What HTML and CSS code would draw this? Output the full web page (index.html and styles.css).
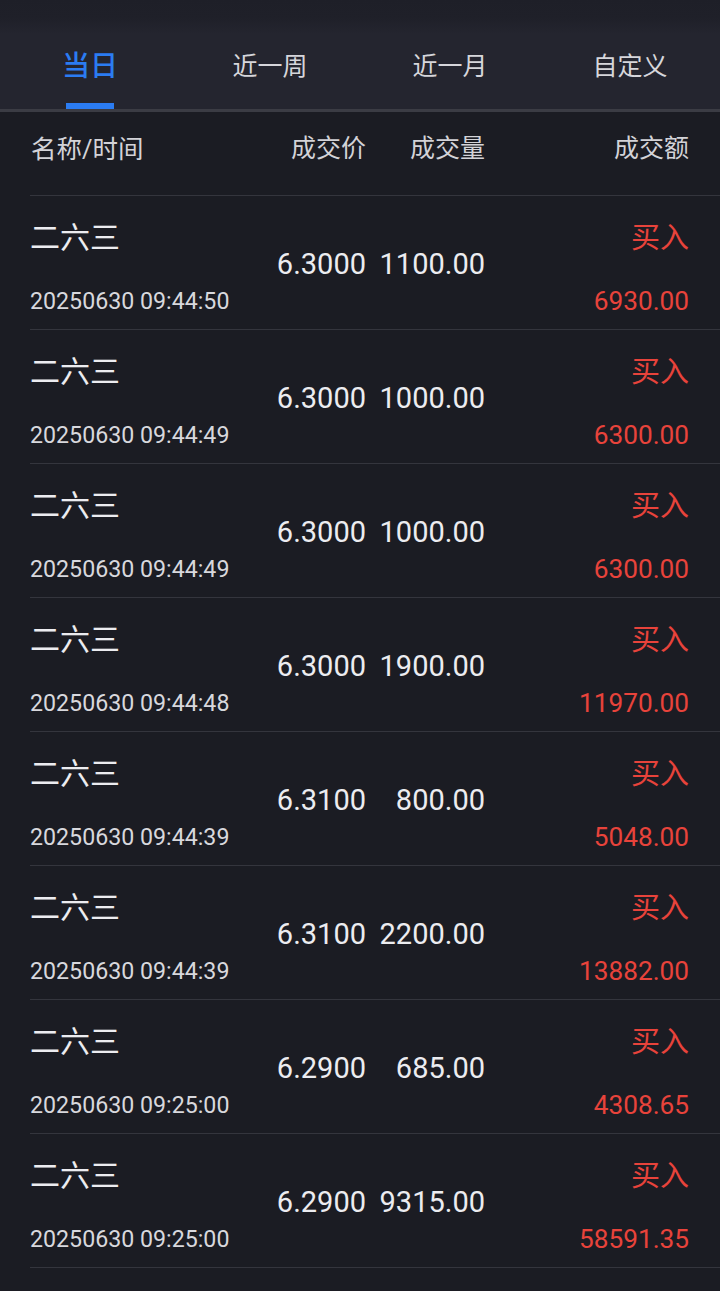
FILE: index.html
```html
<!DOCTYPE html>
<html lang="zh-CN">
<head>
<meta charset="utf-8">
<title>成交明细</title>
<link rel="stylesheet" href="styles.css">
</head>
<body>
<div class="page">
  <nav class="tabs">
    <div class="tab active"><span class="tab-label">当日</span><span class="tab-bar"></span></div>
    <div class="tab"><span class="tab-label">近一周</span><span class="tab-bar"></span></div>
    <div class="tab"><span class="tab-label">近一月</span><span class="tab-bar"></span></div>
    <div class="tab"><span class="tab-label">自定义</span><span class="tab-bar"></span></div>
  </nav>
  <div class="list">
    <div class="head">
      <span class="h-name">名称/时间</span>
      <span class="h-col">成交价</span>
      <span class="h-col">成交量</span>
      <span class="h-col">成交额</span>
    </div>
    <div class="row">
      <span class="name">二六三</span><span class="time">20250630 09:44:50</span>
      <span class="price">6.3000</span><span class="vol">1100.00</span>
      <span class="side">买入</span><span class="amt">6930.00</span>
    </div>
    <div class="row">
      <span class="name">二六三</span><span class="time">20250630 09:44:49</span>
      <span class="price">6.3000</span><span class="vol">1000.00</span>
      <span class="side">买入</span><span class="amt">6300.00</span>
    </div>
    <div class="row">
      <span class="name">二六三</span><span class="time">20250630 09:44:49</span>
      <span class="price">6.3000</span><span class="vol">1000.00</span>
      <span class="side">买入</span><span class="amt">6300.00</span>
    </div>
    <div class="row">
      <span class="name">二六三</span><span class="time">20250630 09:44:48</span>
      <span class="price">6.3000</span><span class="vol">1900.00</span>
      <span class="side">买入</span><span class="amt">11970.00</span>
    </div>
    <div class="row">
      <span class="name">二六三</span><span class="time">20250630 09:44:39</span>
      <span class="price">6.3100</span><span class="vol">800.00</span>
      <span class="side">买入</span><span class="amt">5048.00</span>
    </div>
    <div class="row">
      <span class="name">二六三</span><span class="time">20250630 09:44:39</span>
      <span class="price">6.3100</span><span class="vol">2200.00</span>
      <span class="side">买入</span><span class="amt">13882.00</span>
    </div>
    <div class="row">
      <span class="name">二六三</span><span class="time">20250630 09:25:00</span>
      <span class="price">6.2900</span><span class="vol">685.00</span>
      <span class="side">买入</span><span class="amt">4308.65</span>
    </div>
    <div class="row">
      <span class="name">二六三</span><span class="time">20250630 09:25:00</span>
      <span class="price">6.2900</span><span class="vol">9315.00</span>
      <span class="side">买入</span><span class="amt">58591.35</span>
    </div>
  </div>
</div>
</body>
</html>
```

FILE: styles.css
```css
html, body {
  margin: 0;
  padding: 0;
  background: #1b1c23;
}
body {
  font-family: Roboto, "Noto Sans CJK SC", sans-serif;
  color: #e6e6ea;
}
.page {
  width: 720px;
  min-height: 1291px;
  background: #1b1c23;
}
.tabs {
  display: grid;
  grid-template-columns: repeat(4, 1fr);
  height: 109px;
  background: linear-gradient(#1e1f28 0px, #1f2029 18px, #24252f 34px, #24252f 100%);
  border-bottom: 3px solid #3b3c44;
}
.tab {
  display: flex;
  flex-direction: column;
  align-items: center;
  padding-top: 47px;
}
.tab-label {
  font-size: 25px;
  line-height: 40px;
  height: 40px;
  color: #d6d6db;
  margin-bottom: 16px;
}
.tab-bar {
  width: 48px;
  height: 6px;
  background: transparent;
}
.tab.active .tab-label {
  color: #2b7cf2;
  font-size: 28px;
  font-weight: 500;
}
.tab.active .tab-bar {
  background: #2b7cf2;
}
.list {
  margin-left: 30px;
}
.head,
.row {
  display: grid;
  grid-template-columns: 226px 110px 119px 204px;
  padding-right: 31px;
}
.head {
  height: 68px;
  padding-bottom: 15px;
  align-items: center;
  border-bottom: 1px solid #34353d;
  font-size: 25px;
  color: #d3d3d8;
}
.h-name {
  padding-left: 1px;
  font-size: 25.5px;
}
.h-col {
  text-align: right;
}
.row {
  grid-template-rows: 74px 52px;
  padding-top: 5px;
  padding-bottom: 2px;
  border-bottom: 1px solid #34353d;
}
.name {
  grid-column: 1;
  grid-row: 1;
  align-self: center;
  font-size: 30px;
  line-height: 40px;
  color: #ececf0;
}
.time {
  grid-column: 1;
  grid-row: 2;
  align-self: center;
  font-size: 23.2px;
  line-height: 30px;
  color: #d8d8dd;
  white-space: nowrap;
}
.price,
.vol {
  grid-row: 1 / 3;
  align-self: center;
  text-align: right;
  font-size: 29px;
  line-height: 36px;
  color: #ececf0;
}
.price { grid-column: 2; }
.vol { grid-column: 3; }
.side {
  grid-column: 4;
  grid-row: 1;
  align-self: center;
  text-align: right;
  font-size: 29px;
  line-height: 40px;
  color: #e8433b;
}
.amt {
  grid-column: 4;
  grid-row: 2;
  align-self: center;
  text-align: right;
  font-size: 26.2px;
  line-height: 32px;
  color: #e8433b;
}
```
